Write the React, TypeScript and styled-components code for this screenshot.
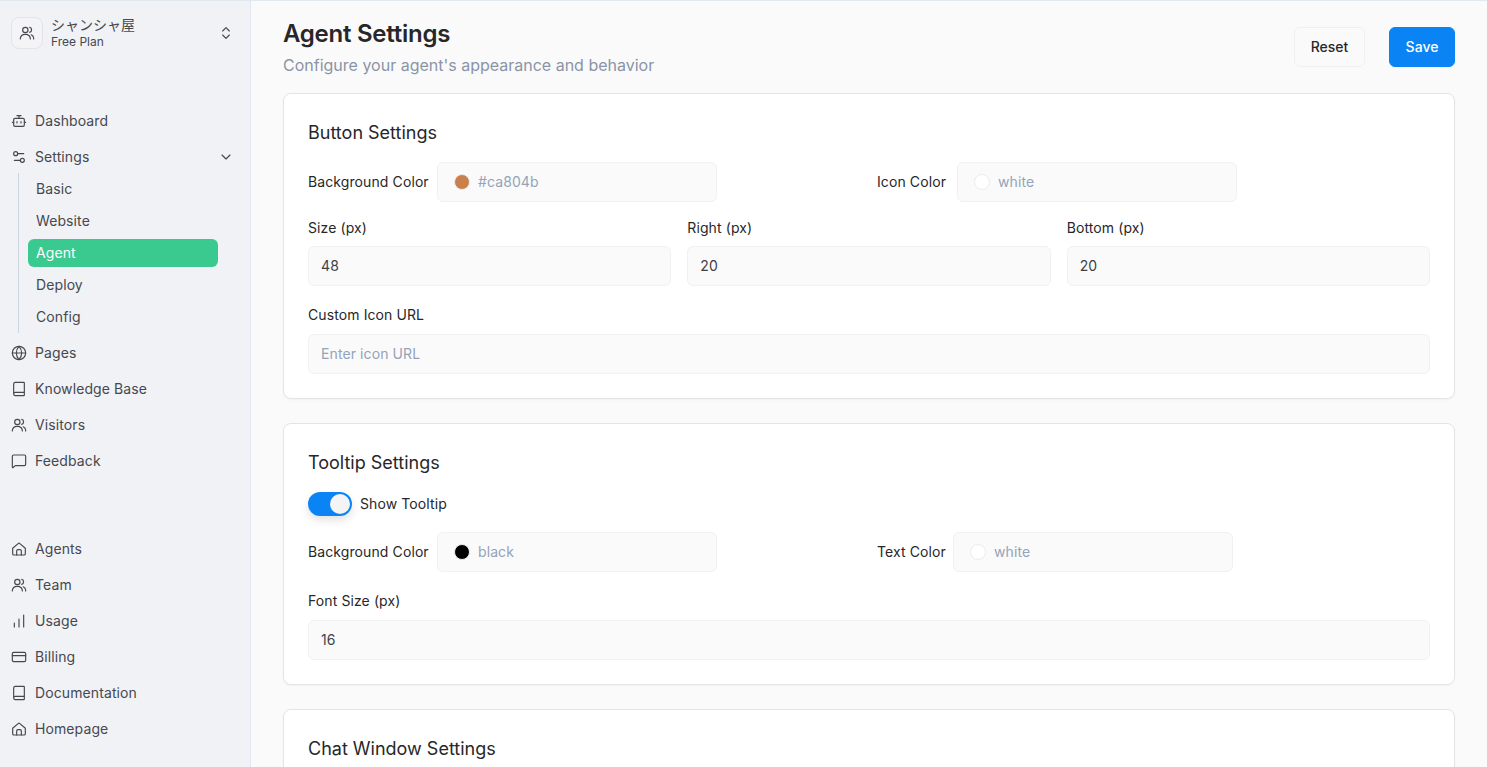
import React from "react";
import styled, { createGlobalStyle } from "styled-components";
import {
  Book,
  ChartNoAxesColumnIncreasing,
  ChevronDown,
  ChevronsUpDown,
  CreditCard,
  Globe,
  MessageSquare,
  Settings2,
} from "lucide-react";

const ICON_STROKE = 1.75;

const GlobalStyle = createGlobalStyle`
  html, body {
    margin: 0;
    height: 100%;
    overflow: hidden;
  }
  body {
    font-family: Inter, "Noto Sans CJK JP", sans-serif;
    color: #27272a;
    background: #fafafa;
  }
  * {
    box-sizing: border-box;
  }
`;

const Layout = styled.div`
  display: flex;
  height: 767px;
  border-top: 1px solid #e2e8f0;
  overflow: hidden;
`;

const Sidebar = styled.aside`
  width: 251px;
  flex-shrink: 0;
  background: #f1f2f6;
  border-right: 1px solid #e2e8f0;
  padding: 16px 16px 0 11px;
  color: #46484f;
`;

const OrgRow = styled.div`
  display: flex;
  align-items: center;
  gap: 8px;
  height: 32px;
  margin-bottom: 54px;
`;

const OrgIcon = styled.div`
  width: 32px;
  height: 32px;
  border: 1px solid #e4e4e7;
  border-radius: 8px;
  display: flex;
  align-items: center;
  justify-content: center;
  background: #f4f4f7;
`;

const OrgText = styled.div`
  flex: 1;
  display: flex;
  flex-direction: column;
  margin-top: -2px;
`;

const OrgName = styled.div`
  font-size: 14px;
  line-height: 18px;
  font-weight: 400;
`;

const OrgPlan = styled.div`
  font-size: 12px;
  line-height: 15px;
`;

const NavGroup = styled.nav`
  display: flex;
  flex-direction: column;
`;

const BottomGroup = styled(NavGroup)`
  margin-top: 52px;
`;

const NavItem = styled.div`
  display: flex;
  align-items: center;
  gap: 8px;
  height: 36px;
  font-size: 14px;
  letter-spacing: 0.1px;
  svg {
    flex-shrink: 0;
  }
`;

const NavLabel = styled.span`
  flex: 1;
  padding-bottom: 2px;
`;

const SubList = styled.div`
  display: flex;
  flex-direction: column;
  gap: 4px;
  margin: -2px 16px 2px 7px;
  padding: 2px 0 2px 9px;
  border-left: 1px solid #cbd5e1;
`;

const SubItem = styled.div<{ $active?: boolean }>`
  display: flex;
  align-items: center;
  height: 28px;
  padding: 0 0 2px 8px;
  border-radius: 6px;
  font-size: 14px;
  letter-spacing: 0.1px;
  background: ${({ $active }) => ($active ? "#3ac98e" : "transparent")};
  color: ${({ $active }) => ($active ? "#ffffff" : "#46484f")};
`;

const Main = styled.main`
  flex: 1;
  min-width: 0;
  padding: 0 32px;
  background: #fafafa;
`;

const Header = styled.header`
  display: flex;
  justify-content: space-between;
  align-items: flex-start;
  height: 92px;
  padding-top: 17px;
`;

const Title = styled.h1`
  margin: 0 0 3px;
  font-size: 24px;
  line-height: 32px;
  font-weight: 600;
  letter-spacing: -0.25px;
  color: #27272a;
`;

const Subtitle = styled.p`
  margin: 0;
  font-size: 16px;
  line-height: 24px;
  color: #8a94a6;
`;

const Actions = styled.div`
  display: flex;
  gap: 24px;
  margin-top: 9px;
`;

const Button = styled.button<{ $primary?: boolean; $width: number }>`
  width: ${({ $width }) => $width}px;
  height: 40px;
  padding: 0 0 1px;
  border-radius: 6px;
  font-family: inherit;
  font-size: 14px;
  font-weight: 500;
  border: 1px solid ${({ $primary }) => ($primary ? "#0a84f5" : "#f0f0f2")};
  background: ${({ $primary }) => ($primary ? "#0a84f5" : "#fafafa")};
  color: ${({ $primary }) => ($primary ? "#ffffff" : "#27272a")};
`;

const Card = styled.section`
  background: #ffffff;
  border: 1px solid #e4e4e7;
  border-radius: 8px;
  padding: 24px;
  margin-bottom: 24px;
  box-shadow: 0 1px 2px rgba(0, 0, 0, 0.04);
`;

const CardTitle = styled.h2`
  margin: 0 0 16px;
  padding-top: 1px;
  height: 28px;
  font-size: 18px;
  line-height: 28px;
  font-weight: 400;
  color: #27272a;
`;

const TwoColumns = styled.div`
  display: grid;
  grid-template-columns: 1fr 1fr;
  gap: 16px;
`;

const ThreeColumns = styled.div`
  display: grid;
  grid-template-columns: repeat(3, 1fr);
  gap: 16px;
  margin-top: 16px;
`;

const InlineField = styled.div`
  display: flex;
  align-items: center;
  gap: 8px;
`;

const Label = styled.div<{ $width?: number }>`
  width: ${({ $width }) => ($width ? `${$width}px` : "auto")};
  font-size: 14px;
  line-height: 20px;
  color: #27272a;
  letter-spacing: 0.1px;
  white-space: nowrap;
`;

const StackLabel = styled(Label)`
  margin-bottom: 8px;
`;

const WideField = styled.div`
  margin-top: 19px;
  ${StackLabel} {
    margin-bottom: 9px;
  }
`;

const InputBox = styled.div<{ $muted?: boolean; $width?: number }>`
  display: flex;
  align-items: center;
  gap: 8px;
  height: 40px;
  padding: 0 12px 1px;
  width: ${({ $width }) => ($width ? `${$width}px` : "100%")};
  background: #fafafa;
  border: 1px solid #f1f1f3;
  border-radius: 6px;
  font-size: 14px;
  letter-spacing: 0.1px;
  color: ${({ $muted }) => ($muted ? "#94a3b8" : "#3f3f46")};
`;

const Swatch = styled.span<{ $color: string }>`
  width: 16px;
  height: 16px;
  margin: 1px 0 0 4px;
  border-radius: 50%;
  border: 1px solid #ececef;
  background: ${({ $color }) => $color};
`;

const ToggleRow = styled.div`
  display: flex;
  align-items: center;
  gap: 8px;
  height: 24px;
  margin-bottom: 16px;
`;

const Toggle = styled.span`
  position: relative;
  width: 44px;
  height: 24px;
  border-radius: 12px;
  background: #0a84f5;
  box-shadow: 0 4px 8px rgba(0, 0, 0, 0.12);
  &::after {
    content: "";
    position: absolute;
    top: 2px;
    right: 2px;
    width: 20px;
    height: 20px;
    border-radius: 50%;
    background: #f4f4f5;
  }
`;

const Glyph = styled.svg.attrs({
  width: 16,
  height: 16,
  viewBox: "0 0 24 24",
  fill: "none",
  stroke: "currentColor",
  strokeWidth: ICON_STROKE,
  strokeLinecap: "round",
  strokeLinejoin: "round",
})``;

const BotIcon = () => (
  <Glyph>
    <rect x="4" y="8" width="16" height="12" rx="2" />
    <path d="M2 14h2M20 14h2M12 8V4M9 4h6M9 13v2M15 13v2" />
  </Glyph>
);

const PeopleIcon = () => (
  <Glyph>
    <circle cx="9.5" cy="7.5" r="4" />
    <path d="M2 21v-1a7 7 0 0 1 7-6h1a7 7 0 0 1 7 6v1" />
    <path d="M16 3.4a4 4 0 0 1 0 7.7M22 21v-1a6 6 0 0 0-3.6-5.4" />
  </Glyph>
);

const HomeIcon = () => (
  <Glyph>
    <path d="M2.5 10.8l8.2-6.9a2 2 0 0 1 2.6 0l8.2 6.9V19a2 2 0 0 1-2 2h-15a2 2 0 0 1-2-2Z" />
    <path d="M8.5 21v-6a2 2 0 0 1 2-2h3a2 2 0 0 1 2 2v6" />
  </Glyph>
);

const ColorField = ({
  label,
  labelWidth,
  color,
  value,
}: {
  label: string;
  labelWidth: number;
  color: string;
  value: string;
}) => (
  <InlineField>
    <Label $width={labelWidth}>{label}</Label>
    <InputBox $muted $width={280}>
      <Swatch $color={color} />
      {value}
    </InputBox>
  </InlineField>
);

const NumberField = ({ label, value }: { label: string; value: string }) => (
  <div>
    <StackLabel>{label}</StackLabel>
    <InputBox>{value}</InputBox>
  </div>
);

const mainNav = [
  { icon: <Globe size={16} strokeWidth={ICON_STROKE} />, label: "Pages" },
  { icon: <Book size={16} strokeWidth={ICON_STROKE} />, label: "Knowledge Base" },
  { icon: <PeopleIcon />, label: "Visitors" },
  { icon: <MessageSquare size={16} strokeWidth={ICON_STROKE} />, label: "Feedback" },
];

const bottomNav = [
  { icon: <HomeIcon />, label: "Agents" },
  { icon: <PeopleIcon />, label: "Team" },
  { icon: <ChartNoAxesColumnIncreasing size={16} strokeWidth={ICON_STROKE} />, label: "Usage" },
  { icon: <CreditCard size={16} strokeWidth={ICON_STROKE} />, label: "Billing" },
  { icon: <Book size={16} strokeWidth={ICON_STROKE} />, label: "Documentation" },
  { icon: <HomeIcon />, label: "Homepage" },
];

const subNav = ["Basic", "Website", "Agent", "Deploy", "Config"];

const App: React.FC = () => {
  return (
    <Layout>
      <GlobalStyle />
      <Sidebar>
        <OrgRow>
          <OrgIcon>
            <PeopleIcon />
          </OrgIcon>
          <OrgText>
            <OrgName>シャンシャ屋</OrgName>
            <OrgPlan>Free Plan</OrgPlan>
          </OrgText>
          <ChevronsUpDown size={16} strokeWidth={ICON_STROKE} />
        </OrgRow>
        <NavGroup>
          <NavItem>
            <BotIcon />
            <NavLabel>Dashboard</NavLabel>
          </NavItem>
          <NavItem>
            <Settings2 size={16} strokeWidth={ICON_STROKE} />
            <NavLabel>Settings</NavLabel>
            <ChevronDown size={16} strokeWidth={ICON_STROKE} />
          </NavItem>
          <SubList>
            {subNav.map((item) => (
              <SubItem key={item} $active={item === "Agent"}>
                {item}
              </SubItem>
            ))}
          </SubList>
          {mainNav.map(({ icon, label }) => (
            <NavItem key={label}>
              {icon}
              <NavLabel>{label}</NavLabel>
            </NavItem>
          ))}
        </NavGroup>
        <BottomGroup>
          {bottomNav.map(({ icon, label }) => (
            <NavItem key={label}>
              {icon}
              <NavLabel>{label}</NavLabel>
            </NavItem>
          ))}
        </BottomGroup>
      </Sidebar>
      <Main>
        <Header>
          <div>
            <Title>Agent Settings</Title>
            <Subtitle>Configure your agent's appearance and behavior</Subtitle>
          </div>
          <Actions>
            <Button $width={71}>Reset</Button>
            <Button $primary $width={66}>
              Save
            </Button>
          </Actions>
        </Header>

        <Card>
          <CardTitle>Button Settings</CardTitle>
          <TwoColumns>
            <ColorField label="Background Color" labelWidth={121} color="#ca804b" value="#ca804b" />
            <ColorField label="Icon Color" labelWidth={72} color="#ffffff" value="white" />
          </TwoColumns>
          <ThreeColumns>
            <NumberField label="Size (px)" value="48" />
            <NumberField label="Right (px)" value="20" />
            <NumberField label="Bottom (px)" value="20" />
          </ThreeColumns>
          <WideField>
            <StackLabel>Custom Icon URL</StackLabel>
            <InputBox $muted>Enter icon URL</InputBox>
          </WideField>
        </Card>

        <Card>
          <CardTitle>Tooltip Settings</CardTitle>
          <ToggleRow>
            <Toggle />
            <Label>Show Tooltip</Label>
          </ToggleRow>
          <TwoColumns>
            <ColorField label="Background Color" labelWidth={121} color="#000000" value="black" />
            <ColorField label="Text Color" labelWidth={68} color="#ffffff" value="white" />
          </TwoColumns>
          <WideField>
            <StackLabel>Font Size (px)</StackLabel>
            <InputBox>16</InputBox>
          </WideField>
        </Card>

        <Card>
          <CardTitle>Chat Window Settings</CardTitle>
        </Card>
      </Main>
    </Layout>
  );
};

export default App;
